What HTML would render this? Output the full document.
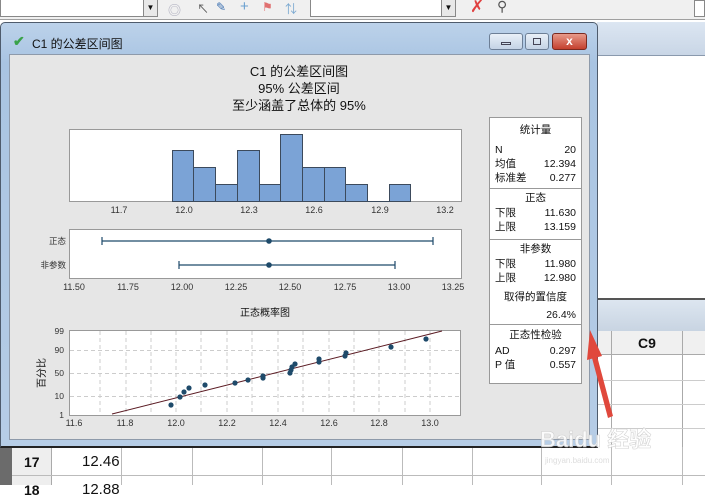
<!DOCTYPE html>
<html><head><meta charset="utf-8"><style>
*{margin:0;padding:0;box-sizing:border-box}
body{width:705px;height:485px;overflow:hidden;position:relative;background:#fff;font-family:"Liberation Sans","Noto Sans CJK SC",sans-serif;font-size:11px;color:#111}
.a{position:absolute}
</style></head><body>
<div class="a" style="left:0;top:0;width:705px;height:20px;background:#f0f0f0;border-bottom:1px solid #a0a0a0"></div>
<div class="a" style="left:0;top:0;width:158px;height:17px;background:#fff;border:1px solid #888;border-top:none"></div>
<div class="a" style="left:143px;top:0;width:15px;height:17px;background:#e8e8e8;border:1px solid #888;border-top:none;font-size:8px;text-align:center;line-height:15px">▼</div>
<div class="a" style="left:310px;top:0;width:146px;height:17px;background:#fff;border:1px solid #888;border-top:none"></div>
<div class="a" style="left:441px;top:0;width:15px;height:17px;background:#e8e8e8;border:1px solid #888;border-top:none;font-size:8px;text-align:center;line-height:15px">▼</div>
<div class="a" style="left:168px;top:0;color:#aab;font-size:13px">◎</div>
<div class="a" style="left:197px;top:0;color:#555;font-size:12px">↖</div>
<div class="a" style="left:216px;top:0;color:#3a6fb0;font-size:12px">✎</div>
<div class="a" style="left:240px;top:-2px;color:#6aa0d0;font-size:15px">+</div>
<div class="a" style="left:262px;top:0;color:#e07070;font-size:12px">⚑</div>
<div class="a" style="left:285px;top:0;color:#7aa8d0;font-size:12px">⇅</div>
<div class="a" style="left:470px;top:-3px;color:#e04040;font-size:17px">✗</div>
<div class="a" style="left:497px;top:-2px;color:#555;font-size:14px">⚲</div>
<div class="a" style="left:694px;top:0;width:11px;height:17px;border:1px solid #888;background:#fff"></div>

<div class="a" style="left:597px;top:22px;width:108px;height:33px;background:linear-gradient(#dce6f2,#c9d6e6)"></div>
<div class="a" style="left:597px;top:55px;width:108px;height:1px;background:#8a99ad"></div>
<div class="a" style="left:597px;top:298px;width:108px;height:33px;background:linear-gradient(#dde6f0,#c8d4e2);border-top:2px solid #555"></div>
<div class="a" style="left:597px;top:331px;width:108px;height:24px;background:#f0f0f0;border-bottom:1px solid #aaa"></div>
<div class="a" style="left:611px;top:331px;width:1px;height:120px;background:#aaa"></div>
<div class="a" style="left:682px;top:331px;width:1px;height:120px;background:#aaa"></div>
<div class="a" style="left:638px;top:335px;font-weight:bold;font-size:14px">C9</div>
<div class="a" style="left:597px;top:380px;width:108px;height:1px;background:#ccc"></div>
<div class="a" style="left:597px;top:404px;width:108px;height:1px;background:#ccc"></div>
<div class="a" style="left:597px;top:428px;width:108px;height:1px;background:#ccc"></div>

<div class="a" style="left:0;top:447px;width:12px;height:38px;background:#6b6b6b"></div>
<div class="a" style="left:12px;top:447px;width:40px;height:38px;background:#eeeeee;border-right:1px solid #aaa"></div>
<div class="a" style="left:12px;top:475px;width:693px;height:1px;background:#bbb"></div>
<div class="a" style="left:24px;top:454px;font-weight:bold;font-size:14px">17</div>
<div class="a" style="left:82px;top:453px;font-size:15px">12.46</div>
<div class="a" style="left:82px;top:481px;font-size:15px">12.88</div>
<div class="a" style="left:24px;top:482px;font-weight:bold;font-size:14px">18</div>
<svg class="a" style="left:0;top:447px" width="705" height="38"><g stroke="#bbb"><line x1="121.5" y1="0" x2="121.5" y2="38"/><line x1="192.5" y1="0" x2="192.5" y2="38"/><line x1="262.5" y1="0" x2="262.5" y2="38"/><line x1="331.5" y1="0" x2="331.5" y2="38"/><line x1="402.5" y1="0" x2="402.5" y2="38"/><line x1="472.5" y1="0" x2="472.5" y2="38"/><line x1="541.5" y1="0" x2="541.5" y2="38"/><line x1="611.5" y1="0" x2="611.5" y2="38"/><line x1="682.5" y1="0" x2="682.5" y2="38"/></g></svg>

<div class="a" style="left:0;top:22px;width:598px;height:426px;background:linear-gradient(#bcd2ea,#a9c4e2 40px,#b6cde6);border:1px solid #4e5b6c;border-radius:5px 5px 0 0;border-bottom:2px solid #222"></div>
<div class="a" style="left:13px;top:33px;color:#3aa24a;font-size:14px;font-weight:bold">✔</div>
<div class="a" style="left:32px;top:35px;font-size:12px">C1 的公差区间图</div>
<div class="a" style="left:489px;top:33px;width:34px;height:17px;border:1px solid #6d7f96;border-radius:3px;background:linear-gradient(#e9f0f8,#c4d3e5)"><div style="margin:8px auto 0;width:10px;height:3px;border:1px solid #445"></div></div>
<div class="a" style="left:525px;top:33px;width:24px;height:17px;border:1px solid #6d7f96;border-radius:3px;background:linear-gradient(#e9f0f8,#c4d3e5)"><div style="margin:4px auto 0;width:8px;height:7px;border:1px solid #445"></div></div>
<div class="a" style="left:552px;top:33px;width:35px;height:17px;border:1px solid #7a2a20;border-radius:3px;background:linear-gradient(#e79a8a,#c4402e);color:#fff;text-align:center;font-weight:bold;font-size:12px;line-height:15px">x</div>
<div class="a" style="left:9px;top:54px;width:581px;height:386px;background:#e6e6e6;border:1px solid #8e9aaa"></div>

<div class="a" style="left:0;top:63px;width:598px;text-align:center;font-size:13px;line-height:17px">C1 的公差区间图<br>95% 公差区间<br>至少涵盖了总体的 95%</div>

<svg class="a" style="left:0;top:0" width="598" height="448" font-family="Liberation Sans, Noto Sans CJK SC, sans-serif" font-size="9" fill="#333">
<rect x="69.5" y="129.5" width="392" height="72" fill="#fff" stroke="#999"/>
<g fill="#7ba3d6" stroke="#3c4a5c">
<rect x="172.5" y="150.5" width="21" height="51"/><rect x="193.5" y="167.5" width="22" height="34"/><rect x="215.5" y="184.5" width="22" height="17"/><rect x="237.5" y="150.5" width="22" height="51"/><rect x="259.5" y="184.5" width="21" height="17"/><rect x="280.5" y="134.5" width="22" height="67"/><rect x="302.5" y="167.5" width="22" height="34"/><rect x="324.5" y="167.5" width="21" height="34"/><rect x="345.5" y="184.5" width="22" height="17"/><rect x="389.5" y="184.5" width="21" height="17"/>
</g>
<line x1="367" y1="201.5" x2="389" y2="201.5" stroke="#3c4a5c"/>
<g text-anchor="middle"><text x="119" y="213">11.7</text><text x="184" y="213">12.0</text><text x="249" y="213">12.3</text><text x="314" y="213">12.6</text><text x="380" y="213">12.9</text><text x="445" y="213">13.2</text></g>
<rect x="69.5" y="229.5" width="392" height="49" fill="#fff" stroke="#999"/>
<g stroke="#1e4a6a" stroke-width="1.2"><line x1="102" y1="241" x2="433" y2="241"/><line x1="102" y1="237" x2="102" y2="245"/><line x1="433" y1="237" x2="433" y2="245"/><line x1="179" y1="265" x2="395" y2="265"/><line x1="179" y1="261" x2="179" y2="269"/><line x1="395" y1="261" x2="395" y2="269"/></g>
<circle cx="269" cy="241" r="2.8" fill="#1e4a6a"/><circle cx="269" cy="265" r="2.8" fill="#1e4a6a"/>
<g text-anchor="end" font-size="8.5"><text x="66" y="244">正态</text><text x="66" y="268">非参数</text></g>
<g text-anchor="middle"><text x="74" y="290">11.50</text><text x="128" y="290">11.75</text><text x="182" y="290">12.00</text><text x="236" y="290">12.25</text><text x="290" y="290">12.50</text><text x="345" y="290">12.75</text><text x="399" y="290">13.00</text><text x="453" y="290">13.25</text></g>
<text x="265" y="316" text-anchor="middle" font-size="10" fill="#111">正态概率图</text>
<rect x="69.5" y="330.5" width="391" height="85" fill="#fff" stroke="#999"/>
<g stroke="#ccc" stroke-dasharray="4,3"><line x1="70" y1="350.5" x2="460" y2="350.5"/><line x1="70" y1="373.5" x2="460" y2="373.5"/><line x1="70" y1="396.5" x2="460" y2="396.5"/>
<line x1="100" y1="331" x2="100" y2="415"/><line x1="126" y1="331" x2="126" y2="415"/><line x1="151" y1="331" x2="151" y2="415"/><line x1="176" y1="331" x2="176" y2="415"/><line x1="201" y1="331" x2="201" y2="415"/><line x1="227" y1="331" x2="227" y2="415"/><line x1="252" y1="331" x2="252" y2="415"/><line x1="278" y1="331" x2="278" y2="415"/><line x1="303" y1="331" x2="303" y2="415"/><line x1="329" y1="331" x2="329" y2="415"/><line x1="354" y1="331" x2="354" y2="415"/><line x1="379" y1="331" x2="379" y2="415"/><line x1="405" y1="331" x2="405" y2="415"/><line x1="430" y1="331" x2="430" y2="415"/></g>
<line x1="112" y1="414" x2="442" y2="331" stroke="#5a1a22"/>
<g fill="#1e4a6a"><circle cx="171" cy="405" r="2.6"/><circle cx="180" cy="397" r="2.6"/><circle cx="184" cy="392" r="2.6"/><circle cx="189" cy="388" r="2.6"/><circle cx="205" cy="385" r="2.6"/><circle cx="235" cy="383" r="2.6"/><circle cx="248" cy="380" r="2.6"/><circle cx="263" cy="378" r="2.6"/><circle cx="263" cy="376" r="2.6"/><circle cx="290" cy="373" r="2.6"/><circle cx="291" cy="370" r="2.6"/><circle cx="292" cy="367" r="2.6"/><circle cx="295" cy="364" r="2.6"/><circle cx="319" cy="362" r="2.6"/><circle cx="319" cy="359" r="2.6"/><circle cx="345" cy="356" r="2.6"/><circle cx="346" cy="353" r="2.6"/><circle cx="391" cy="347" r="2.6"/><circle cx="426" cy="339" r="2.6"/></g>
<g text-anchor="end" font-size="8.5"><text x="64" y="334">99</text><text x="64" y="353">90</text><text x="64" y="376">50</text><text x="64" y="399">10</text><text x="64" y="418">1</text></g>
<g text-anchor="middle"><text x="74" y="426">11.6</text><text x="125" y="426">11.8</text><text x="176" y="426">12.0</text><text x="227" y="426">12.2</text><text x="278" y="426">12.4</text><text x="329" y="426">12.6</text><text x="379" y="426">12.8</text><text x="430" y="426">13.0</text></g>
<text transform="translate(45,373) rotate(-90)" text-anchor="middle" font-size="10" fill="#111">百分比</text>
</svg>

<div class="a" style="left:489px;top:117px;width:93px;height:267px;background:#fff;border:1px solid #999;font-size:10.5px;line-height:14px;color:#111">
<div style="text-align:center;margin-top:5px;height:20px">统计量</div>
<div style="padding:0 5px;display:flex;justify-content:space-between"><span>N</span><span>20</span></div>
<div style="padding:0 5px;display:flex;justify-content:space-between"><span>均值</span><span>12.394</span></div>
<div style="padding:0 5px;display:flex;justify-content:space-between;height:17px"><span>标准差</span><span>0.277</span></div>
<div style="border-top:1px solid #999;text-align:center;height:18px;padding-top:2px">正态</div>
<div style="padding:0 5px;display:flex;justify-content:space-between"><span>下限</span><span>11.630</span></div>
<div style="padding:0 5px;display:flex;justify-content:space-between;height:19px"><span>上限</span><span>13.159</span></div>
<div style="border-top:1px solid #999;text-align:center;height:18px;padding-top:2px">非参数</div>
<div style="padding:0 5px;display:flex;justify-content:space-between"><span>下限</span><span>11.980</span></div>
<div style="padding:0 5px;display:flex;justify-content:space-between;height:19px"><span>上限</span><span>12.980</span></div>
<div style="text-align:center;height:18px">取得的置信度</div>
<div style="padding:0 5px;text-align:right;height:16px">26.4%</div>
<div style="border-top:1px solid #999;text-align:center;height:20px;padding-top:3px">正态性检验</div>
<div style="padding:0 5px;display:flex;justify-content:space-between"><span>AD</span><span>0.297</span></div>
<div style="padding:0 5px;display:flex;justify-content:space-between"><span>P 值</span><span>0.557</span></div>
</div>

<svg class="a" style="left:0;top:0" width="705" height="485">
<polygon points="613,416 597,356 592,358 608,418" fill="#e0483c"/>
<polygon points="590,330 602,356 587,360" fill="#e0483c"/>
<text x="540" y="447" font-family="Liberation Sans, Noto Sans CJK SC, sans-serif" font-size="22" font-weight="bold" fill="#fff" opacity="0.85" stroke="#ccc" stroke-width="0.6">Baidu 经验</text>
<text x="545" y="463" font-size="8" fill="#ddd" font-family="Liberation Sans, sans-serif">jingyan.baidu.com</text>
</svg>
</body></html>
